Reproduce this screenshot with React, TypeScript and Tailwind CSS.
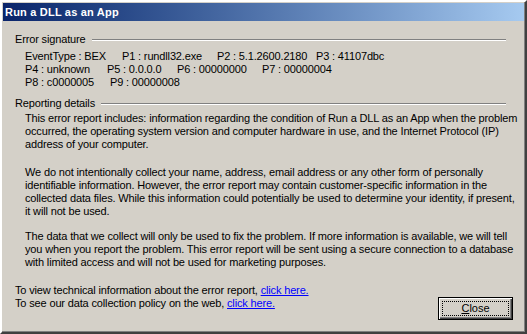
import type { ReactNode } from 'react';

const font = { fontFamily: '"Liberation Sans", Arial, sans-serif' };

function GroupHeader({ children }: { children: ReactNode }) {
    return (
        <div className="flex items-center h-[13px] pr-[18px]">
            <span className="whitespace-nowrap">{children}</span>
            <div className="flex-1 ml-[6px] h-[2px] border-t border-t-[#808080] border-b border-b-white" />
        </div>
    );
}

function Lines({ lines }: { lines: string[] }) {
    return (
        <div className="pl-[10px] whitespace-nowrap">
            {lines.map((l) => (
                <div key={l} className="h-[13px]">{l}</div>
            ))}
        </div>
    );
}

export default function App() {
    const p1 = [
        'This error report includes: information regarding the condition of Run a DLL as an App when the problem',
        'occurred, the operating system version and computer hardware in use, and the Internet Protocol (IP)',
        'address of your computer.',
    ];
    const p2 = [
        'We do not intentionally collect your name, address, email address or any other form of personally',
        'identifiable information. However, the error report may contain customer-specific information in the',
        'collected data files. While this information could potentially be used to determine your identity, if present,',
        'it will not be used.',
    ];
    const p3 = [
        'The data that we collect will only be used to fix the problem. If more information is available, we will tell',
        'you when you report the problem. This error report will be sent using a secure connection to a database',
        'with limited access and will not be used for marketing purposes.',
    ];

    return (
        <div
            className="w-[527px] h-[334px] bg-[#d4d0c8] text-black text-[11px] leading-[13px] tracking-[-0.15px] flex flex-col border-2 border-t-white border-l-white border-r-[#404040] border-b-[#404040] shadow-[inset_-1px_-1px_0_#808080] p-[1px]"
            style={font}
        >
            {/* title bar */}
            <div className="h-[18px] flex items-center px-[2px] bg-gradient-to-r from-[#0a246a] to-[#a6caf0]">
                <span className="text-white font-bold text-[11px] tracking-[0.2px]">Run a DLL as an App</span>
            </div>

            <div className="flex flex-col pl-[12px] pt-[12px]">
                <GroupHeader>Error signature</GroupHeader>

                <div className="pl-[10px] mt-[4px] whitespace-nowrap">
                    <div className="flex h-[13px]">
                        <span className="w-[97px]">EventType : BEX</span>
                        <span className="w-[95px]">P1 : rundll32.exe</span>
                        <span className="w-[99px]">P2 : 5.1.2600.2180</span>
                        <span>P3 : 41107dbc</span>
                    </div>
                    <div className="flex h-[13px]">
                        <span className="w-[82px]">P4 : unknown</span>
                        <span className="w-[70px]">P5 : 0.0.0.0</span>
                        <span className="w-[85px]">P6 : 00000000</span>
                        <span>P7 : 00000004</span>
                    </div>
                    <div className="flex h-[13px]">
                        <span className="w-[85px]">P8 : c0000005</span>
                        <span>P9 : 00000008</span>
                    </div>
                </div>

                <div className="mt-[8px]">
                    <GroupHeader>Reporting details</GroupHeader>
                </div>

                <div className="mt-[2px]">
                    <Lines lines={p1} />
                </div>
                <div className="mt-[15px]">
                    <Lines lines={p2} />
                </div>
                <div className="mt-[12px]">
                    <Lines lines={p3} />
                </div>

                <div className="flex mt-[15px] pr-[11px]">
                    <div className="flex-1 whitespace-nowrap">
                        <div className="h-[13px]">
                            To view technical information about the error report,{' '}
                            <span className="text-[#0000ff] underline">click here.</span>
                        </div>
                        <div className="h-[13px]">
                            To see our data collection policy on the web,{' '}
                            <span className="text-[#0000ff] underline">click here.</span>
                        </div>
                    </div>
                    <button className="mt-[13px] w-[75px] h-[23px] border border-black bg-[#d4d0c8] shadow-[inset_1px_1px_0_#fff,inset_-1px_-1px_0_#404040,inset_-2px_-2px_0_#808080] p-[3px] text-[11px] tracking-normal">
                        <span className="flex h-full items-center justify-center border border-dotted border-black">
                            <span className="underline">C</span>lose
                        </span>
                    </button>
                </div>
            </div>
        </div>
    );
}
